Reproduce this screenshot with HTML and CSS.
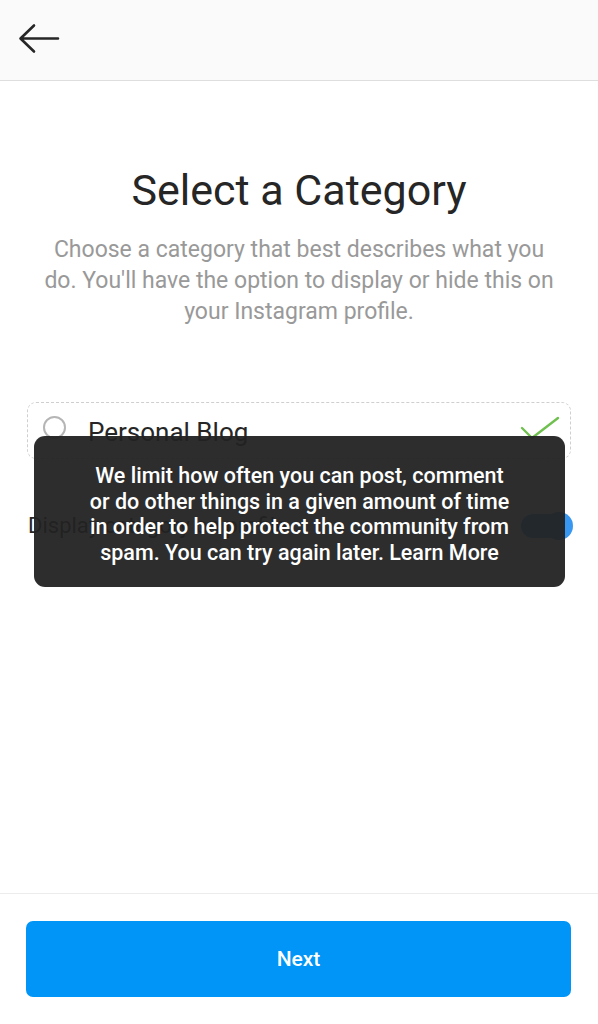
FILE: index.html
```html
<!DOCTYPE html>
<html>
<head>
<meta charset="utf-8">
<link rel="stylesheet" href="styles.css">
</head>
<body>
<div class="screen">
  <header class="topbar">
    <svg class="back" width="44" height="32" viewBox="0 0 44 32">
      <path d="M41 15.5 H4 M17 2.5 L3.5 15.5 L17 28.5" fill="none" stroke="#262626" stroke-width="2.6" stroke-linecap="round" stroke-linejoin="round"/>
    </svg>
  </header>
  <main class="content">
    <h1 class="title">Select a Category</h1>
    <p class="subtitle">Choose a category that best describes what you<br>do. You'll have the option to display or hide this on<br>your Instagram profile.</p>
    <div class="field">
      <span class="radio"></span>
      <span class="field-label">Personal Blog</span>
      <svg class="check" width="42" height="26" viewBox="0 0 42 26">
        <path d="M3 12 L13 22 L39 2" fill="none" stroke="#70c050" stroke-width="2.4" stroke-linecap="round" stroke-linejoin="round"/>
      </svg>
    </div>
    <div class="display-row">
      <span class="display-label">Display category on profile</span>
      <span class="toggle"><span class="knob"></span></span>
    </div>
  </main>
  <footer class="footer">
    <button class="next">Next</button>
  </footer>
  <div class="toast">We limit how often you can post, comment<br>or do other things in a given amount of time<br>in order to help protect the community from<br>spam. You can try again later. Learn More</div>
</div>
</body>
</html>
```

FILE: styles.css
```css
html, body {
  margin: 0;
  padding: 0;
  background: #ffffff;
}
body {
  font-family: Roboto, "Liberation Sans", Arial, sans-serif;
  color: #262626;
}
.screen {
  position: relative;
  width: 598px;
  height: 1024px;
  display: flex;
  flex-direction: column;
  overflow: hidden;
}
.topbar {
  height: 80px;
  background: #fafafa;
  border-bottom: 1px solid #dedede;
  display: flex;
  align-items: center;
  padding-left: 17px;
  flex-shrink: 0;
}
.back {
  display: block;
  margin-top: -2px;
}
.content {
  flex: 1;
  display: flex;
  flex-direction: column;
}
.title {
  margin: 84px 0 0;
  font-size: 43px;
  line-height: 50px;
  font-weight: 400;
  text-align: center;
  color: #262626;
}
.subtitle {
  margin: 19px 20px 0;
  font-size: 23px;
  line-height: 31px;
  color: #999999;
  text-align: center;
  white-space: nowrap;
}
.field {
  margin: 75px 27px 0;
  height: 55px;
  border: 1px dashed #cfcfcf;
  border-radius: 9px;
  display: flex;
  align-items: center;
  padding: 0 9px 0 15px;
}
.radio {
  width: 19px;
  height: 19px;
  border: 2px solid #b5b5b5;
  border-radius: 50%;
  margin-top: -6px;
  flex-shrink: 0;
}
.field-label {
  margin-left: 22px;
  font-size: 26px;
  color: #262626;
  margin-top: 2px;
  flex: 1;
}
.check {
  margin-top: -4px;
}
.display-row {
  margin: 54px 27px 0 28px;
  display: flex;
  align-items: center;
  justify-content: space-between;
}
.display-label {
  font-size: 22px;
  color: #262626;
}
.toggle {
  width: 50px;
  height: 24px;
  border-radius: 12px;
  background: #3897f0;
  position: relative;
}
.knob {
  position: absolute;
  right: -2px;
  top: -2px;
  width: 28px;
  height: 28px;
  border-radius: 50%;
  background: #3897f0;
}
.footer {
  height: 131px;
  border-top: 1px solid #ececec;
  display: flex;
  flex-direction: column;
  padding: 27px 27px 0 26px;
  box-sizing: border-box;
  flex-shrink: 0;
}
.next {
  height: 76px;
  width: 100%;
  border: none;
  border-radius: 7px;
  background: #0095f6;
  color: #ffffff;
  font-family: Roboto, "Liberation Sans", Arial, sans-serif;
  font-size: 21px;
  font-weight: 500;
}
.toast {
  position: absolute;
  left: 34px;
  top: 436px;
  width: 531px;
  height: 151px;
  box-sizing: border-box;
  padding: 27px 10px 0;
  background: rgba(34, 34, 34, 0.95);
  border-radius: 11px;
  color: #ffffff;
  font-size: 21.5px;
  line-height: 25.6px;
  font-weight: 500;
  text-align: center;
  white-space: nowrap;
}
```
